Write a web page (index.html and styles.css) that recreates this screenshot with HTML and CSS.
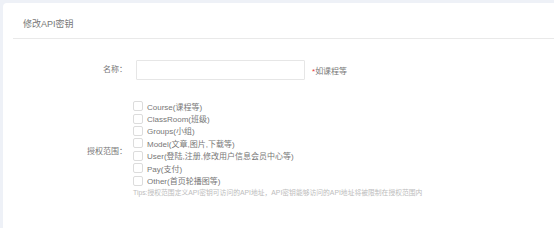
FILE: index.html
```html
<!DOCTYPE html>
<html lang="zh">
<head>
<meta charset="utf-8">
<link rel="stylesheet" href="styles.css">
</head>
<body>
<div class="card">
  <div class="card-head"><span class="title">修改API密钥</span></div>
  <div class="form">
    <div class="row row-name">
      <label class="label">名称：</label>
      <div class="field">
        <input class="input" type="text">
        <span class="hint"><span class="req">*</span>如课程等</span>
      </div>
    </div>
    <div class="row row-scope">
      <label class="label label-scope">授权范围：</label>
      <div class="field field-col">
        <label class="check"><span class="box"></span>Course(课程等)</label>
        <label class="check"><span class="box"></span>ClassRoom(班级)</label>
        <label class="check"><span class="box"></span>Groups(小组)</label>
        <label class="check"><span class="box"></span>Model(文章,图片,下载等)</label>
        <label class="check"><span class="box"></span>User(登陆,注册,修改用户信息会员中心等)</label>
        <label class="check"><span class="box"></span>Pay(支付)</label>
        <label class="check"><span class="box"></span>Other(首页轮播图等)</label>
        <div class="tips">Tips:授权范围定义API密钥可访问的API地址，API密钥能够访问的API地址将被限制在授权范围内</div>
      </div>
    </div>
  </div>
</div>
</body>
</html>
```

FILE: styles.css
```css
html, body {
  margin: 0;
  padding: 0;
  background: #eef1f7;
  height: 100%;
  overflow: hidden;
}
body {
  font-family: "Liberation Sans", "Noto Sans CJK SC", sans-serif;
  color: #777;
  font-size: 8px;
}
.card {
  margin: 3px 0 0 3px;
  background: #fff;
  border-radius: 4px 0 0 0;
  height: 230px;
}
.card-head {
  margin-left: 10px;
  padding-left: 10px;
  height: 29px;
  padding-top: 6px;
  display: flex;
  align-items: center;
  border-bottom: 1px solid #e9e9e9;
}
.title {
  font-size: 9px;
  color: #777;
}
.form {
  padding-top: 21px;
}
.row {
  display: flex;
}
.label {
  width: 124px;
  flex: none;
  text-align: right;
  color: #777;
  line-height: 20px;
}
.field {
  margin-left: 6px;
  display: flex;
  align-items: center;
}
.input {
  margin: 0 0 0 3px;
  width: 167px;
  height: 18px;
  padding: 0;
  border: 1px solid #e6e6e6;
  border-radius: 1px;
  box-sizing: content-box;
  outline: none;
}
.hint {
  margin-left: 7px;
  color: #777;
}
.req {
  color: #e5383b;
}
.row-scope {
  margin-top: 20px;
  align-items: center;
}
.label-scope {
  padding-top: 5px;
}
.field-col {
  flex-direction: column;
  align-items: flex-start;
}
.check {
  display: flex;
  align-items: center;
  height: 12.4px;
  font-size: 8px;
  color: #777;
}
.box {
  width: 8px;
  height: 8px;
  border: 1px solid #dcdcdc;
  border-radius: 2px;
  margin-right: 4px;
  background: #fff;
}
.tips {
  font-size: 6.8px;
  line-height: 12px;
  color: #bcbcbc;
  white-space: nowrap;
}
```
